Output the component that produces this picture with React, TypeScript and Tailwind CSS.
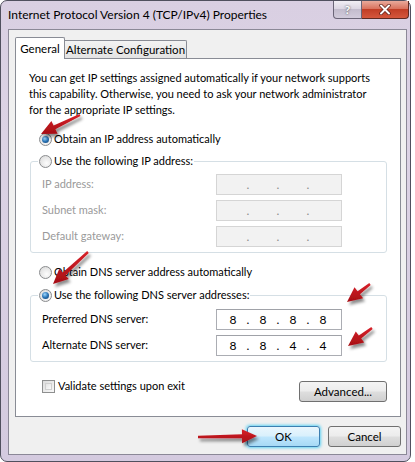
import React from "react";

const ui = "font-['Lato',sans-serif]";

function Radio({ checked }: { checked?: boolean }) {
  return (
    <span className="w-[13px] h-[13px] rounded-full border border-[#8a8c8e] bg-[radial-gradient(circle_at_60%_65%,#fdfdfd_0%,#d6d6d6_100%)] flex items-center justify-center shrink-0">
      {checked && (
        <span className="w-[7px] h-[7px] rounded-full bg-[radial-gradient(circle_at_40%_35%,#9fd8ff_0%,#2a74b5_50%,#0c3766_100%)]" />
      )}
    </span>
  );
}

function Checkbox() {
  return (
    <span className="w-[13px] h-[13px] border border-[#8e8f8f] bg-[linear-gradient(135deg,#dcdcdc_0%,#f8f8f8_100%)] shrink-0 p-[2px]">
      <span className="block w-full h-full border border-[#d0d0d0] bg-[linear-gradient(135deg,#e4e4e4,#fafafa)]" />
    </span>
  );
}

function IpBox({ value, disabled }: { value?: string[]; disabled?: boolean }) {
  const parts = value ?? ["", "", "", ""];
  return (
    <div
      className={`w-[126px] h-[21px] border flex items-center pl-[5px] text-[12px] ${
        disabled
          ? "border-[#d5d5d5] bg-[#f2f2f2] text-[#8d8d8d]"
          : "border-[#abadb3] border-t-[#a0a2a8] bg-white text-black"
      }`}
    >
      {parts.map((p, i) => (
        <React.Fragment key={i}>
          <span className="w-[22px] text-center">{p}</span>
          {i < 3 && <span className="w-[8px] text-center">.</span>}
        </React.Fragment>
      ))}
    </div>
  );
}

function Field({
  label,
  value,
  disabled,
}: {
  label: string;
  value?: string[];
  disabled?: boolean;
}) {
  return (
    <div className="flex items-center h-[21px]">
      <span className={`w-[174px] ${disabled ? "text-[#9a9a9a]" : "text-black"}`}>{label}</span>
      <IpBox value={value} disabled={disabled} />
    </div>
  );
}

const btn =
  "h-[21px] rounded-[3px] border text-[11.5px] text-black flex items-center justify-center";
const btnGrey =
  "border-[#707070] bg-[linear-gradient(to_bottom,#f4f4f4_0%,#ececec_48%,#dedede_52%,#d0d0d0_100%)]";

function Arrow({ x1, y1, x2, y2 }: { x1: number; y1: number; x2: number; y2: number }) {
  const dx = x2 - x1;
  const dy = y2 - y1;
  const len = Math.hypot(dx, dy);
  const ux = dx / len;
  const uy = dy / len;
  const nx = -uy;
  const ny = ux;
  const head = 15;
  const bx = x2 - ux * head;
  const by = y2 - uy * head;
  const pts = [
    [x1 + nx * 1.2, y1 + ny * 1.2],
    [bx + nx * 2, by + ny * 2],
    [bx + nx * 7, by + ny * 7],
    [x2, y2],
    [bx - nx * 7, by - ny * 7],
    [bx - nx * 2, by - ny * 2],
    [x1 - nx * 1.2, y1 - ny * 1.2],
  ]
    .map((p) => p.map((v) => v.toFixed(1)).join(","))
    .join(" ");
  return <polygon points={pts} fill="url(#redg)" filter="url(#shadow)" />;
}

export default function App() {
  return (
    <div className={`relative w-[415px] h-[462px] bg-white overflow-hidden ${ui}`}>
      <div className="w-[411px] h-[462px] rounded-[7px] border border-[#50505e] bg-[linear-gradient(to_bottom,#d9cfe2_0%,#dcd3e5_30%,#d4cadf_100%)] flex flex-col">
        {/* title bar */}
        <div className="h-[28px] flex items-start">
          <span className="pl-[7px] pt-[5px] text-[12px] text-black leading-[18px] whitespace-nowrap">
            Internet Protocol Version 4 (TCP/IPv4) Properties
          </span>
          <div className="ml-auto mr-[1px] flex">
            <div className="w-[29px] h-[18px] rounded-bl-[4px] border border-t-0 border-[#6b6577] bg-[linear-gradient(to_bottom,#f1eef4_0%,#dcd6e3_45%,#c3bccd_50%,#d2cbdb_100%)] flex items-center justify-center text-[12px] font-bold text-white [text-shadow:0_0_2px_#333]">
              ?
            </div>
            <div className="w-[47px] h-[18px] rounded-br-[4px] border border-t-0 border-l-0 border-[#5e2a22] bg-[linear-gradient(to_bottom,#e9aa9b_0%,#d9735e_45%,#c13e26_50%,#d5573d_100%)] flex items-center justify-center">
              <svg width="12" height="11" viewBox="0 0 12 11">
                <path d="M2 1.5L10 9.5M10 1.5L2 9.5" stroke="#5a1c14" strokeWidth="3.4" strokeLinecap="round" />
                <path d="M2 1.5L10 9.5M10 1.5L2 9.5" stroke="#fff" strokeWidth="2" strokeLinecap="round" />
              </svg>
            </div>
          </div>
        </div>

        {/* client area */}
        <div className="flex-1 ml-[7px] mr-[3px] mb-[6px] border border-[#8b8897] bg-[#f0f0f0] pt-[7px] pl-[6px] pr-[5px] flex flex-col text-[11px]">
          {/* tabs */}
          <div className="flex items-end h-[21px] whitespace-nowrap text-[11.5px]">
            <div className="relative z-10 -mb-px h-[22px] w-[50px] border border-b-0 border-[#898c95] bg-white flex items-center justify-center text-black rounded-t-[2px]">
              General
            </div>
            <div className="h-[18px] w-[122px] border border-l-0 border-b-0 border-[#898c95] bg-[linear-gradient(to_bottom,#f3f3f3,#e3e3e3)] flex items-center justify-center text-black rounded-tr-[2px]">
              Alternate Configuration
            </div>
          </div>

          {/* panel */}
          <div className="h-[359px] border border-[#898c95] bg-white flex flex-col text-black">
            <p className="mt-[11px] ml-[13px] leading-[16px] whitespace-nowrap">
              You can get IP settings assigned automatically if your network supports
              <br />
              this capability. Otherwise, you need to ask your network administrator
              <br />
              for the appropriate IP settings.
            </p>

            <label className="mt-[13px] ml-[23px] h-[16px] flex items-center gap-[2px]">
              <Radio checked />
              <span>Obtain an IP address automatically</span>
            </label>

            <fieldset className="mt-[6px] ml-[14px] w-[357px] border border-[#d5dfe5] rounded-[3px] px-[11px] pb-[5px] flex flex-col gap-[5px]">
              <legend className="-ml-[4px] px-[1px] h-[16px] flex items-center gap-[2px]">
                <Radio />
                <span>Use the following IP address:</span>
              </legend>
              <div className="mt-[5px] flex flex-col gap-[5px]">
                <Field label="IP address:" disabled />
                <Field label="Subnet mask:" disabled />
                <Field label="Default gateway:" disabled />
              </div>
            </fieldset>

            <label className="mt-[11px] ml-[23px] h-[16px] flex items-center gap-[2px]">
              <Radio />
              <span>Obtain DNS server address automatically</span>
            </label>

            <fieldset className="mt-[7px] ml-[14px] w-[357px] border border-[#d5dfe5] rounded-[3px] px-[11px] pb-[5px]">
              <legend className="-ml-[4px] px-[1px] h-[16px] flex items-center gap-[2px]">
                <Radio checked />
                <span>Use the following DNS server addresses:</span>
              </legend>
              <div className="mt-[6px] flex flex-col gap-[5px]">
                <Field label="Preferred DNS server:" value={["8", "8", "8", "8"]} />
                <Field label="Alternate DNS server:" value={["8", "8", "4", "4"]} />
              </div>
            </fieldset>

            <div className="mt-[16px] ml-[26px] mr-[13px] flex items-start">
              <label className="h-[16px] flex items-center gap-[3px]">
                <Checkbox />
                <span>Validate settings upon exit</span>
              </label>
              <div className={`ml-auto mt-[3px] w-[88px] ${btn} ${btnGrey}`}>Advanced...</div>
            </div>
          </div>

          {/* dialog buttons */}
          <div className="mt-[9px] flex justify-end gap-[8px]">
            <div
              className={`w-[73px] ${btn} border-[#3c7fb1] bg-[linear-gradient(to_bottom,#eaf6fd_0%,#d9f0fc_48%,#bee6fd_52%,#a7d9f5_100%)] shadow-[0_0_3px_1px_#62d2f3]`}
            >
              OK
            </div>
            <div className={`w-[73px] ${btn} ${btnGrey}`}>Cancel</div>
          </div>
        </div>
      </div>

      {/* annotation arrows */}
      <svg className="absolute inset-0 pointer-events-none" width="415" height="462">
        <defs>
          <linearGradient id="redg" x1="0" y1="0" x2="0" y2="1">
            <stop offset="0" stopColor="#d8222a" />
            <stop offset="1" stopColor="#a50e14" />
          </linearGradient>
          <filter id="shadow" x="-50%" y="-50%" width="200%" height="200%">
            <feDropShadow dx="2" dy="3" stdDeviation="1.6" floodColor="#000" floodOpacity="0.45" />
          </filter>
        </defs>
        <Arrow x1={80} y1={115} x2={41} y2={134} />
        <Arrow x1={88} y1={252} x2={53} y2={284} />
        <Arrow x1={370} y1={284} x2={347} y2={302} />
        <Arrow x1={372} y1={328} x2={348} y2={346} />
        <Arrow x1={198} y1={437} x2={257} y2={436} />
      </svg>
    </div>
  );
}
